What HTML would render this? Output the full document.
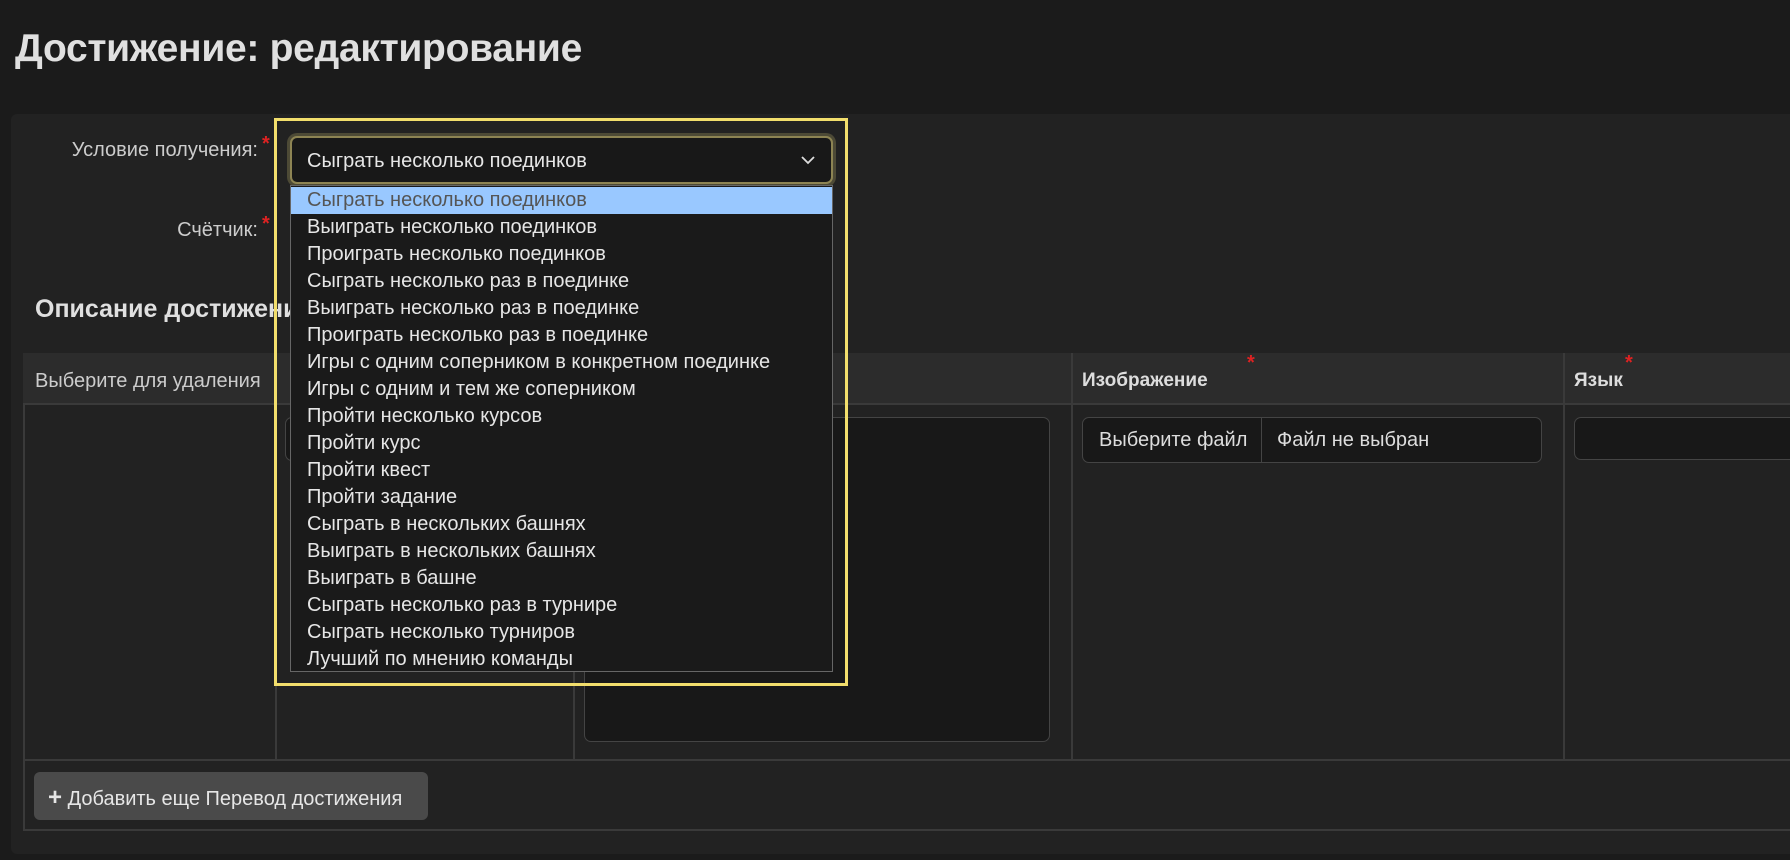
<!DOCTYPE html>
<html><head><meta charset="utf-8"><style>
*{box-sizing:border-box;margin:0;padding:0}
body{width:1790px;height:860px;background:#1b1b1b;font-family:"Liberation Sans",sans-serif;color:#ddd;position:relative;overflow:hidden}
.abs{position:absolute}
h1{position:absolute;left:15px;top:27px;font-size:39px;font-weight:bold;color:#e0e0e0;letter-spacing:-0.3px}
.panel{left:11px;top:114px;width:1800px;height:740px;background:#222;border-radius:6px}
.lbl{font-size:20px;color:#ccc;text-align:right;width:250px}
.star{color:#d22;font-size:20px;font-weight:bold}
.tbl{left:23px;top:353px;width:1800px;height:478px;border:2px solid #3a3a3a}
.hdr{left:23px;top:353px;width:1800px;height:52px;background:#2c2c2c;border-bottom:2px solid #3a3a3a}
.vl{top:353px;width:2px;height:407px;background:#3a3a3a}
.hl{left:23px;width:1800px;height:2px;background:#3a3a3a}
.inp{background:#181818;border:1px solid #444;border-radius:7px}
.btn{left:34px;top:772px;width:394px;height:48px;background:#4a4a4a;border-radius:6px;font-size:20px;color:#e6e6e6;padding:12px 0 0 14px;white-space:nowrap}
.yb{left:274px;top:118px;width:574px;height:568px;border:3px solid #f2de6c}
.sel{left:290px;top:136px;width:543px;height:48px;background:#181818;border:2px solid #8d8453;border-radius:7px;box-shadow:0 0 0 3px #4d4a36;font-size:20px;color:#e6e6e6;padding:12px 0 0 15px}
.list{left:290px;top:185px;width:543px;height:487px;background:#1a1a1a;border:1px solid #666}
.list div{height:27px;line-height:27px;font-size:20px;padding-left:16px;color:#e6e6e6;white-space:nowrap}
.list div.on{background:#99c8ff;color:#555}
</style></head><body>
<h1>Достижение: редактирование</h1>
<div class="abs panel"></div>
<div class="abs lbl" style="left:8px;top:139px">Условие получения:</div>
<div class="abs star" style="left:262px;top:133px">*</div>
<div class="abs lbl" style="left:8px;top:219px">Счётчик:</div>
<div class="abs star" style="left:262px;top:213px">*</div>
<div class="abs" style="left:35px;top:295px;font-size:25px;font-weight:bold;color:#e0e0e0">Описание достижения</div>
<div class="abs tbl"></div>
<div class="abs hdr"></div>
<div class="abs vl" style="left:275px"></div>
<div class="abs vl" style="left:573px"></div>
<div class="abs vl" style="left:1071px"></div>
<div class="abs vl" style="left:1563px"></div>
<div class="abs hl" style="top:759px"></div>
<div class="abs" style="left:35px;top:370px;font-size:20px;color:#ccc">Выберите для удаления</div>
<div class="abs" style="left:1082px;top:370px;font-size:19px;font-weight:bold;color:#ddd">Изображение</div>
<div class="abs star" style="left:1247px;top:352px">*</div>
<div class="abs" style="left:1574px;top:370px;font-size:19px;font-weight:bold;color:#ddd">Язык</div>
<div class="abs star" style="left:1625px;top:352px">*</div>
<div class="abs inp" style="left:285px;top:417px;width:280px;height:44px"></div>
<div class="abs inp" style="left:584px;top:417px;width:466px;height:325px"></div>
<div class="abs inp" style="left:1082px;top:417px;width:460px;height:46px;font-size:20px;color:#ddd">
<span class="abs" style="left:16px;top:11px">Выберите файл</span>
<span class="abs" style="left:178px;top:0;width:1px;height:44px;background:#444"></span>
<span class="abs" style="left:194px;top:11px">Файл не выбран</span></div>
<div class="abs inp" style="left:1574px;top:417px;width:300px;height:43px"></div>
<div class="abs btn"><b style="font-size:24px">+</b> Добавить еще Перевод достижения</div>
<div class="abs yb"></div>
<div class="abs sel">Сыграть несколько поединков
<svg class="abs" style="right:16px;top:18px" width="14" height="9" viewBox="0 0 14 9"><path d="M1 1l6 6 6-6" fill="none" stroke="#ddd" stroke-width="1.8"/></svg></div>
<div class="abs list" style="padding-top:1px">
<div class="on">Сыграть несколько поединков</div>
<div>Выиграть несколько поединков</div>
<div>Проиграть несколько поединков</div>
<div>Сыграть несколько раз в поединке</div>
<div>Выиграть несколько раз в поединке</div>
<div>Проиграть несколько раз в поединке</div>
<div>Игры с одним соперником в конкретном поединке</div>
<div>Игры с одним и тем же соперником</div>
<div>Пройти несколько курсов</div>
<div>Пройти курс</div>
<div>Пройти квест</div>
<div>Пройти задание</div>
<div>Сыграть в нескольких башнях</div>
<div>Выиграть в нескольких башнях</div>
<div>Выиграть в башне</div>
<div>Сыграть несколько раз в турнире</div>
<div>Сыграть несколько турниров</div>
<div>Лучший по мнению команды</div>
</div>
</body></html>
